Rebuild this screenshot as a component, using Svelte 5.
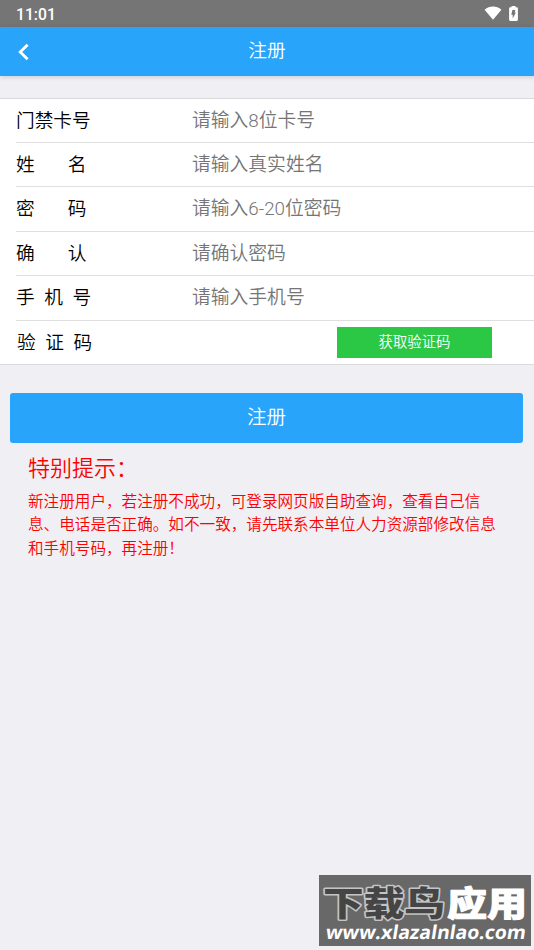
<script>
  let fields = [
    { id: 'card', chars: '门禁卡号', gap: 0, type: 'text', placeholder: '请输入8位卡号', value: '' },
    { id: 'name', chars: '姓名', gap: 33, type: 'text', placeholder: '请输入真实姓名', value: '' },
    { id: 'password', chars: '密码', gap: 33, type: 'password', placeholder: '请输入6-20位密码', value: '' },
    { id: 'confirm', chars: '确认', gap: 33, type: 'password', placeholder: '请确认密码', value: '' },
    { id: 'phone', chars: '手机号', gap: 9.6, type: 'tel', placeholder: '请输入手机号', value: '' }
  ];

  function register() {
    console.log(fields.map((field) => field.value));
  }
</script>

<div class="page">
  <div class="status">
    <span>11:01</span>
    <div class="status-icons">
      <svg width="18" height="14" viewBox="0 0 18 14">
        <path d="M.6 3.700C5.400-.5 12.600-.5 17.400 3.700L9 13.700Z" fill="#fff" />
      </svg>
      <svg width="9" height="15" viewBox="0 0 9 15">
        <path d="M2.500 0h4v1.300h1.300q1.100 0 1.100 1v11.500q0 1.100-1.100 1.100H1.200q-1.100 0-1.100-1.100V2.300q0-1 1.100-1h1.300z" fill="#fff" />
        <path d="M3.400 4h3L5.600 6.600h1.300L3.700 12.500V8.800H2.300z" fill="#757575" />
      </svg>
    </div>
  </div>

  <header>
    <button type="button" class="back" aria-label="返回">
      <svg width="12" height="18" viewBox="0 0 12 18">
        <path d="M10.600 1.700 3.200 9l7.400 7.300" fill="none" stroke="#fff" stroke-width="2.800" />
      </svg>
    </button>
    <h1>注册</h1>
  </header>

  <form on:submit|preventDefault={register}>
    <div class="list">
      {#each fields as field}
        <div class="row">
          <label for={field.id} style="letter-spacing: {field.gap}px">{field.chars}</label>
          <input id={field.id} type={field.type} placeholder={field.placeholder} bind:value={field.value}>
        </div>
      {/each}
      <div class="row">
        <label for="code" class="code-label">验证码</label>
        <input id="code" class="code">
        <button type="button" class="get-code">获取验证码</button>
      </div>
    </div>
    <button type="submit" class="submit">注册</button>
  </form>

  <section class="tips">
    <h2>特别提示：</h2>
    <p>新注册用户，若注册不成功，可登录网页版自助查询，查看自己信息、电话是否正确。如不一致，请先联系本单位人力资源部修改信息和手机号码，再注册！</p>
  </section>

  <div class="mark">
    <svg width="212" height="71" viewBox="0 0 212 71">
      <g class="mark-name">
        <text x="4" y="41" class="dark" textLength="122" lengthAdjust="spacingAndGlyphs">下载鸟</text>
        <text x="128" y="41" class="light" textLength="80" lengthAdjust="spacingAndGlyphs">应用</text>
      </g>
      <text x="6" y="0" class="url" transform="translate(0 64) skewX(-9)" textLength="200" lengthAdjust="spacingAndGlyphs">www.xlazalnlao.com</text>
    </svg>
  </div>
</div>

<style>
  :global(body) {
    background: #efeff4;
  }
  .page {
    position: relative;
    height: 950px;
    overflow: hidden;
    background: #efeff4;
    font-family: Roboto, "Noto Sans CJK SC", sans-serif;
    font-weight: 350;
  }
  .status {
    display: flex;
    align-items: center;
    justify-content: space-between;
    box-sizing: border-box;
    height: 27px;
    padding: 1px 16px 0 16px;
    background: #757575;
    color: #fff;
    font-size: 15.700px;
    font-weight: 500;
  }
  .status-icons {
    display: flex;
    align-items: center;
    gap: 7px;
    padding-bottom: 2px;
  }
  header {
    display: grid;
    grid-template-columns: 60px 1fr 60px;
    align-items: center;
    height: 49px;
    background: #28a4fa;
    box-shadow: 0 1px 5px rgba(0, 0, 0, 0.15);
  }
  button {
    padding: 0;
    border: none;
    font-family: inherit;
    font-weight: inherit;
    color: #fff;
    cursor: pointer;
  }
  .back {
    display: flex;
    padding-left: 17px;
    background: none;
  }
  h1 {
    margin: 0;
    padding-bottom: 2px;
    color: #fff;
    font-size: 18.700px;
    font-weight: inherit;
    line-height: 28px;
    text-align: center;
  }
  .list {
    margin-top: 22px;
    border-top: 1px solid #dadadd;
    border-bottom: 1px solid #dadadd;
    background: #fff;
  }
  .row {
    display: flex;
    align-items: center;
    box-sizing: border-box;
    height: 44.500px;
    margin-left: 16px;
    padding-top: 1px;
    border-bottom: 1px solid #dfdfdf;
  }
  .row:first-child {
    height: 43.500px;
  }
  .row:last-child {
    height: 43px;
    padding-top: 0;
    border-bottom: none;
  }
  label {
    width: 176px;
    flex: none;
    color: #000;
    font-size: 18.700px;
    line-height: 28px;
    white-space: nowrap;
  }
  .code-label {
    box-sizing: border-box;
    padding: 1px 0 0 1px;
    letter-spacing: 9.600px;
  }
  input {
    flex: 1;
    min-width: 0;
    height: 36px;
    padding: 0;
    border: none;
    outline: none;
    background: none;
    font-family: inherit;
    font-size: 18.800px;
    font-weight: inherit;
  }
  input::placeholder {
    color: #757575;
  }
  .code {
    flex: none;
    width: 145px;
  }
  .get-code {
    width: 155px;
    height: 31px;
    padding-bottom: 4px;
    background: #2ac845;
    font-size: 14.400px;
  }
  .submit {
    display: block;
    width: 513px;
    height: 50px;
    margin: 28px 0 0 10px;
    padding-bottom: 4px;
    border-radius: 3px;
    background: #28a4fa;
    font-size: 19.500px;
  }
  .tips {
    padding: 9px 30px 0 28px;
    color: #f00;
  }
  h2 {
    margin: 0;
    font-size: 22px;
    font-weight: inherit;
    line-height: 34px;
  }
  p {
    margin: 5px 0 0;
    font-size: 15.600px;
    line-height: 23.500px;
  }
  .mark {
    position: absolute;
    right: 3px;
    bottom: 4px;
    height: 71px;
    background: #686868;
  }
  .mark-name {
    font-family: "Noto Sans CJK SC", sans-serif;
    font-size: 34.500px;
    font-weight: 900;
    paint-order: stroke;
    stroke-linejoin: round;
  }
  .dark {
    fill: #454545;
    stroke: #c4c4c4;
    stroke-width: 3px;
  }
  .light {
    fill: #fff;
    stroke: #fff;
    stroke-width: 1px;
  }
  .url {
    fill: #fff;
    font-family: "Open Sans", sans-serif;
    font-size: 19px;
    font-weight: 700;
  }
</style>
